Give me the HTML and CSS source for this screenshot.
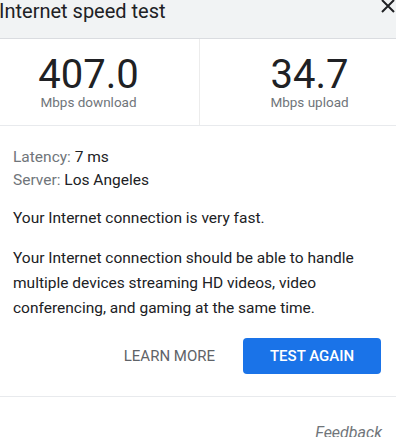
FILE: index.html
```html
<!DOCTYPE html>
<html>
<head>
<meta charset="utf-8">
<link rel="stylesheet" href="styles.css">
</head>
<body>
<div class="card">
  <div class="header">
    <div class="title">Internet speed test</div>
    <svg class="close" width="16" height="16" viewBox="0 0 16 16"><path d="M2 2 L14 14 M14 2 L2 14" stroke="#202124" stroke-width="2" fill="none"/></svg>
  </div>
  <div class="stats">
    <div class="stat stat-down">
      <div class="num">407.0</div>
      <div class="unit">Mbps download</div>
    </div>
    <div class="stat stat-up">
      <div class="num">34.7</div>
      <div class="unit">Mbps upload</div>
    </div>
  </div>
  <div class="info">
    <div class="meta">
      <div><span class="lbl">Latency:</span> 7 ms</div>
      <div><span class="lbl">Server:</span> Los Angeles</div>
    </div>
    <p class="fast">Your Internet connection is very fast.</p>
    <p class="desc">Your Internet connection should be able to handle multiple devices streaming HD videos, video conferencing, and gaming at the same time.</p>
    <div class="actions">
      <span class="learn">LEARN MORE</span>
      <span class="again">TEST AGAIN</span>
    </div>
  </div>
  <div class="footer">
    <span class="feedback">Feedback</span>
  </div>
</div>
</body>
</html>
```
FILE: styles.css
```css
html, body {
  margin: 0;
  padding: 0;
  background: #ffffff;
}
body {
  font-family: Roboto, "Liberation Sans", Arial, sans-serif;
  color: #202124;
  width: 396px;
  height: 437px;
  overflow: hidden;
}
.header {
  height: 38px;
  background: #f1f3f4;
  border-bottom: 1px solid #dadce0;
  display: flex;
  justify-content: space-between;
  align-items: flex-start;
}
.title {
  font-size: 20px;
  line-height: 20px;
  padding-top: 1px;
  margin-left: -1px;
  color: #202124;
}
.close {
  margin-top: -2px;
  margin-right: 0px;
}
.stats {
  display: grid;
  grid-template-columns: 200px 1fr;
  height: 86px;
  border-bottom: 1px solid #e8eaed;
}
.stat {
  display: flex;
  flex-direction: column;
  align-items: center;
  padding-top: 18px;
}
.stat-down {
  padding-right: 22px;
  border-right: 1px solid #ececec;
}
.stat-up {
  padding-left: 23px;
}
.num {
  font-size: 40px;
  line-height: 36px;
  color: #202124;
}
.unit {
  font-size: 13.5px;
  line-height: 16px;
  color: #70757a;
  margin-top: 1px;
}
.info {
  padding: 20px 15px 0 13px;
}
.meta {
  font-size: 15.5px;
  line-height: 23px;
}
.lbl {
  color: #70757a;
}
.fast, .desc {
  margin: 0;
  font-size: 15.5px;
  line-height: 25px;
}
.fast {
  margin-top: 14px;
}
.desc {
  margin-top: 15px;
}
.actions {
  margin-top: 17px;
  display: flex;
  justify-content: flex-end;
  align-items: center;
  gap: 28px;
  height: 36px;
}
.learn {
  font-size: 15px;
  color: #5f6368;
}
.again {
  box-sizing: border-box;
  width: 138px;
  height: 36px;
  border-radius: 4px;
  background: #1a73e8;
  color: #ffffff;
  font-size: 15px;
  font-weight: 500;
  display: flex;
  align-items: center;
  justify-content: center;
}
.footer {
  margin-top: 22px;
  border-top: 1px solid #e8eaed;
  display: flex;
  justify-content: flex-end;
  padding: 26px 14px 0 0;
}
.feedback {
  font-style: italic;
  font-size: 16px;
  color: #70757a;
}
```
